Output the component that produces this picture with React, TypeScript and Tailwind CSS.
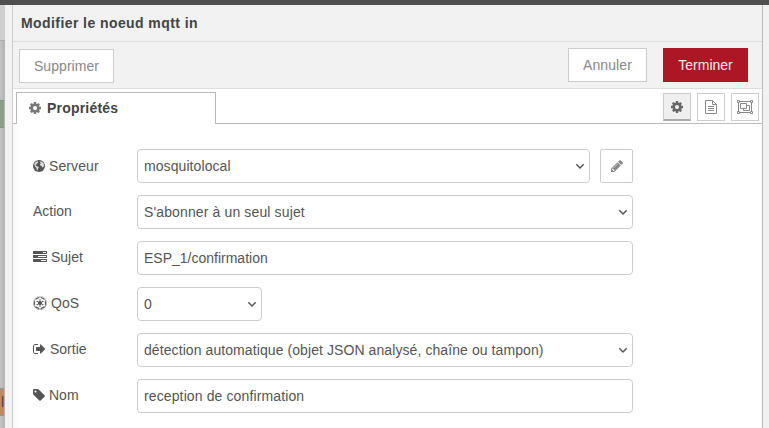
import type { ReactNode } from 'react';
import { FaEmpire } from 'react-icons/fa';

const COG =
  'M1152 896q0-106-75-181t-181-75-181 75-75 181 75 181 181 75 181-75 75-181zm512-109v222q0 12-8 23t-20 13l-185 28q-19 54-39 91 35 50 107 138 10 12 10 25t-9 23q-27 37-99 108t-94 71q-12 0-26-9l-138-108q-44 23-91 38-16 136-29 186-7 28-36 28h-222q-14 0-24.5-8.5t-11.5-21.5l-28-184q-49-16-90-37l-141 107q-10 9-25 9-14 0-25-11-126-114-165-168-7-10-7-23 0-12 8-23 15-21 51-66.5t54-70.5q-27-50-41-99l-183-27q-13-2-21-12.5t-8-23.5v-222q0-12 8-23t19-13l186-28q14-46 39-92-40-57-107-138-10-12-10-24 0-10 9-23 26-36 98.5-107.5t94.5-71.5q13 0 26 10l138 107q44-23 91-38 16-136 29-186 7-28 36-28h222q14 0 24.5 8.5t11.5 21.5l28 184q49 16 90 37l142-107q9-9 24-9 13 0 25 10 129 119 165 170 7 8 7 22 0 12-8 23-15 21-51 66.5t-54 70.5q26 50 41 98l183 28q13 2 21 12.5t8 23.5z';
const PENCIL =
  'M491 1536l91-91-235-235-91 91v107h128v128h107zm523-928q0-22-22-22-10 0-17 7l-542 542q-7 7-7 17 0 22 22 22 10 0 17-7l542-542q7-7 7-17zm-54-192l416 416-832 832h-416v-416zm683 96q0 53-37 90l-166 166-416-416 166-165q36-38 90-38 53 0 91 38l235 234q37 39 37 91z';
const TAG =
  'M576 448q0-53-37.5-90.5t-90.5-37.5-90.5 37.5-37.5 90.5 37.5 90.5 90.5 37.5 90.5-37.5 37.5-90.5zm1067 576q0 53-37 90l-491 492q-39 37-91 37-53 0-90-37l-715-716q-38-37-64.5-101t-26.5-117v-416q0-52 38-90t90-38h416q53 0 117 26.5t102 64.5l715 714q37 39 37 91z';
const TASKS =
  'M1024 1408h640v-128h-640v128zm-384-512h1024v-128h-1024v128zm640-512h384v-128h-384v128zm512 832v256q0 26-19 45t-45 19h-1664q-26 0-45-19t-19-45v-256q0-26 19-45t45-19h1664q26 0 45 19t19 45zm0-512v256q0 26-19 45t-45 19h-1664q-26 0-45-19t-19-45v-256q0-26 19-45t45-19h1664q26 0 45 19t19 45zm0-512v256q0 26-19 45t-45 19h-1664q-26 0-45-19t-19-45v-256q0-26 19-45t45-19h1664q26 0 45 19t19 45z';
const SIGN_OUT =
  'M704 1440q0 4 1 20t.5 26.5-3 23.5-10 19.5-20.5 6.5h-320q-119 0-203.5-84.5t-84.5-203.5v-704q0-119 84.5-203.5t203.5-84.5h320q13 0 22.5 9.5t9.5 22.5q0 4 1 20t.5 26.5-3 23.5-10 19.5-20.5 6.5h-320q-66 0-113 47t-47 113v704q0 66 47 113t113 47h312l11.5 1 11.5 3 8 5.5 7 9 2 13.5zm928-544q0 26-19 45l-544 544q-19 19-45 19t-45-19-19-45v-288h-448q-26 0-45-19t-19-45v-384q0-26 19-45t45-19h448v-288q0-26 19-45t45-19 45 19l544 544q19 19 19 45z';

function Glyph({ d, className, viewBox = '0 0 1792 1792' }: { d: string; className: string; viewBox?: string }) {
  return (
    <svg viewBox={viewBox} fill="currentColor" className={`shrink-0 ${className}`}>
      <path d={d} />
    </svg>
  );
}

function Globe() {
  return (
    <svg viewBox="0 0 12 12" className="size-3 shrink-0">
      <circle cx="6" cy="6" r="6" fill="#555" />
      <path d="M1.2 4 2.4 2.3 4.4 1.3 5.2 2 4.6 3.2 3.6 3.6 3.4 4.6 2.4 5.2 3.4 6 4.8 6.5 5.8 7.6 4.9 9 4.6 10.5 3.6 9.6 3.4 7.8 2 6.6z" fill="#ddd" />
      <path d="M6.600 1.600 8.800 1.700 10.500 3.300 11.200 5.200 10.200 7.300 9.300 7.600 8.600 6 7.300 5.600 6.900 4.300 7.800 3.300z" fill="#ddd" />
    </svg>
  );
}

function FileText() {
  return (
    <svg viewBox="0 0 12 14" fill="none" stroke="#888" className="h-3.5 w-3">
      <path d="M.5.5h7l4 4v9H.5zM7.5.5v4h4M3 6.5h6M3 8.5h6M3 10.5h6" />
    </svg>
  );
}

function ObjectGroup() {
  return (
    <svg viewBox="0 0 16 14" fill="none" stroke="#888" className="h-3.5 w-4">
      <path d="M2 1.5h12M2 12.5h12M1.5 2v10M14.5 2v10M3.5 3.5h6v5h-6zM9.5 5.5h3v5h-6v-2" />
      <path d="M.5.5h2v2h-2zM13.5.5h2v2h-2zM.5 11.5h2v2h-2zM13.5 11.5h2v2h-2z" fill="#fff" />
    </svg>
  );
}

function Select({ value, className }: { value: string; className: string }) {
  return (
    <div className={`relative h-[34px] ${className}`}>
      <select className="block h-full w-full appearance-none rounded border border-[#ccc] bg-white px-1.5 pb-px text-sm text-[#555]">
        <option>{value}</option>
      </select>
      <svg viewBox="0 0 10 7" className="pointer-events-none absolute top-[14px] right-[5px] h-[7px] w-2.5">
        <path d="M1.3 1.3 5 5 8.7 1.3" fill="none" stroke="#555" strokeWidth="1.5" />
      </svg>
    </div>
  );
}

function TextField({ value, className }: { value: string; className: string }) {
  return (
    <input
      defaultValue={value}
      className={`h-[34px] w-[496px] rounded border border-[#ccc] bg-white px-1.5 pb-px text-sm text-[#555] ${className}`}
    />
  );
}

function Row({
  icon,
  label,
  labelClass = 'gap-1 pb-[3px]',
  children,
}: {
  icon?: ReactNode;
  label: string;
  labelClass?: string;
  children: ReactNode;
}) {
  return (
    <div className="flex h-[34px]">
      <div className={`flex w-[104px] items-center text-sm whitespace-nowrap ${labelClass}`}>
        {icon}
        <span>{label}</span>
      </div>
      {children}
    </div>
  );
}

export default function App() {
  return (
    <div className="flex h-[428px] w-[769px] flex-col overflow-hidden bg-[#f2f2f2] font-['Liberation_Sans',Arial,sans-serif] text-[#555]">
      <div className="h-[5px] shrink-0 bg-[#4f4f4f]" />
      <div className="flex min-h-0 flex-1">
        <div className="flex w-[5px] flex-col bg-linear-to-r from-[#c3c3c3] to-[#b3b3b3]">
          <div className="h-[35px] bg-[#cfcfcf]" />
          <div className="h-px bg-[#aaa]" />
          <div className="mt-[59px] h-7 w-1 border-y border-[#829080] bg-[#8b9e89]" />
          <div className="mt-[260px] flex h-7 w-1 items-center justify-end overflow-hidden border-y border-[#999] bg-[#c28863] text-sm leading-none text-[#444]">
            <span>l</span>
          </div>
        </div>
        <div className="w-[7px]" />
        <main className="flex w-[751px] flex-col border-x border-l-[#ccc] border-r-[#bbb] bg-white">
          <header className="h-[37px] border-b border-[#ddd] bg-[#f2f2f2] pt-2 pl-2 text-sm font-bold tracking-[0.42px] text-[#444]">
            Modifier le noeud mqtt in
          </header>
          <div className="flex h-[47px] border-b border-[#ddd] bg-[#f2f2f2] pl-1.5 text-sm text-[#888]">
            <button className="mt-[7px] h-[34px] w-[95px] border border-[#ccc] bg-white tracking-[0.05px]">Supprimer</button>
            <button className="mt-1.5 ml-[454px] h-[34px] w-[79px] border border-[#ccc] bg-white tracking-[0.1px]">Annuler</button>
            <button className="mt-1.5 ml-4 h-[34px] w-[85px] bg-[#ad1625] text-[#eee]">Terminer</button>
          </div>
          <nav className="flex h-[35px]">
            <div className="w-[3px] border-b border-[#bbb]" />
            <div className="mt-[3px] flex w-[200px] items-center gap-[5px] border border-b-0 border-[#bbb] pb-0.5 pl-[11px] text-sm font-bold tracking-[0.2px] text-[#444]">
              <Glyph d={COG} className="size-3.5 text-[#777]" />
              <span>Propriétés</span>
            </div>
            <div className="flex flex-1 justify-end gap-1.5 border-b border-[#bbb] pt-1 pr-[3px]">
              <button className="flex size-7 items-center justify-center border border-b-2 border-[#ccc] border-b-[#aaa] bg-[#efefef]">
                <Glyph d={COG} className="size-3.5 text-[#666]" />
              </button>
              <button className="flex size-7 items-center justify-center border border-[#ccc] bg-white">
                <FileText />
              </button>
              <button className="flex size-7 items-center justify-center border border-[#ccc] bg-white">
                <ObjectGroup />
              </button>
            </div>
          </nav>
          <form className="flex flex-1 flex-col gap-3 bg-linear-to-r from-[#f8f8f8] to-white to-1% pt-[25px] pl-5">
            <Row icon={<Globe />} label="Serveur" labelClass="gap-1 pb-px tracking-[0.1px]">
              <Select value="mosquitolocal" className="w-[453px] tracking-[0.08px]" />
              <button type="button" className="ml-2.5 flex h-[34px] w-[33px] items-center justify-center rounded-xs border border-[#ccc] bg-white">
                <Glyph d={PENCIL} className="size-3.5 text-[#888]" />
              </button>
            </Row>
            <Row label="Action">
              <Select value="S'abonner à un seul sujet" className="w-[496px] tracking-[0.13px]" />
            </Row>
            <Row icon={<Glyph d={TASKS} className="size-3.5" />} label="Sujet">
              <TextField value="ESP_1/confirmation" className="tracking-normal" />
            </Row>
            <Row icon={<FaEmpire className="size-3.5 shrink-0" />} label="QoS">
              <Select value="0" className="w-[125px]" />
            </Row>
            <Row
              icon={<Glyph d={SIGN_OUT} viewBox="64 0 1664 1792" className="h-3.5 w-[13px]" />}
              label="Sortie"
            >
              <Select
                value="détection automatique (objet JSON analysé, chaîne ou tampon)"
                className="w-[496px] tracking-[0.083px]"
              />
            </Row>
            <Row icon={<Glyph d={TAG} viewBox="128 0 1536 1792" className="h-3.5 w-3" />} label="Nom">
              <TextField value="reception de confirmation" className="tracking-[0.12px]" />
            </Row>
          </form>
        </main>
      </div>
    </div>
  );
}
